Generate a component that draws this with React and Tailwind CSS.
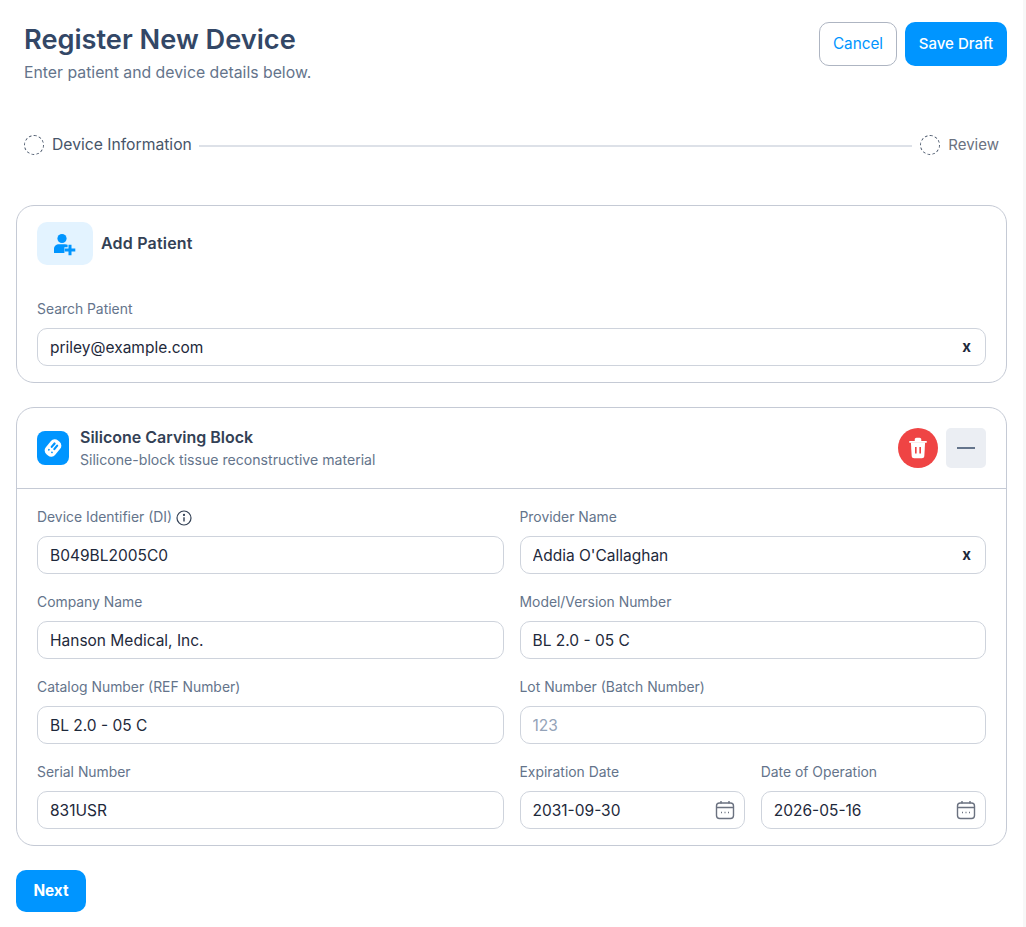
const sans = 'font-["Inter",sans-serif]'

function Field({ label, value, placeholder, info, clear, date, className = '' }) {
  return (
    <div className={`flex flex-col ${className}`}>
      <div className="flex h-[19px] items-center gap-[4px] text-[13.9px] leading-[19px] text-[#64748b]">
        {label}
        {info && (
          <svg width="16" height="16" viewBox="0 0 16 16" fill="none" stroke="#334155" strokeWidth="1.2">
            <circle cx="8" cy="8" r="7" />
            <path d="M8 7.2v4.2" strokeWidth="1.4" />
            <circle cx="8" cy="4.9" r="0.5" fill="#334155" />
          </svg>
        )}
      </div>
      <div className="relative mt-[9px]">
        <input
          readOnly
          value={value || ''}
          placeholder={placeholder}
          className="h-[38px] w-full rounded-[10px] border border-[#ced3dc] bg-white px-3 text-[15.5px] text-[#1e293b] outline-none placeholder:text-[#94a3b8]"
        />
        {clear && (
          <span className="absolute right-[15px] top-[9px] text-[15px] font-bold leading-[20px] text-[#1e293b]">x</span>
        )}
        {date && (
          <svg className="absolute right-[10px] top-[9px]" width="20" height="20" viewBox="0 0 20 20" fill="none" stroke="#6b7280" strokeWidth="1.4">
            <rect x="1.5" y="3" width="17" height="15.5" rx="3" />
            <path d="M1.5 7.5h17M6 1v2.5M14 1v2.5" />
            <path d="M6 12.5h1M9.5 12.5h1M13 12.5h1" strokeWidth="1.6" />
          </svg>
        )}
      </div>
    </div>
  )
}

export default function App() {
  return (
    <div className={`flex h-[927px] w-full overflow-hidden bg-white ${sans}`}>
      <div className="min-w-0 flex-1 px-4">
        <div className="flex justify-between pl-2 pt-[22px]">
          <div>
            <h1 className="mt-[1px] text-[27.2px] font-semibold leading-[34px] text-[#334766]">Register New Device</h1>
            <p className="mt-[5px] text-[15.8px] leading-[22px] text-[#64748b]">Enter patient and device details below.</p>
          </div>
          <div className="flex gap-2">
            <button className="h-11 w-[78px] rounded-[10px] border border-[#aeb5c2] bg-white text-[15.3px] text-[#0095ff]">Cancel</button>
            <button className="h-11 w-[102px] rounded-[10px] bg-[#0095ff] text-[15px] font-medium text-white">Save Draft</button>
          </div>
        </div>

        <div className="mt-[51px] flex h-5 items-center pl-2 pr-2">
          <span className="h-5 w-5 rounded-full border border-dashed border-[#475569]" />
          <span className="ml-2 text-[15.7px] text-[#475569]">Device Information</span>
          <span className="ml-[7px] mr-2 mt-[2px] h-[2px] flex-1 bg-[#dde1e8]" />
          <span className="h-5 w-5 rounded-full border border-dashed border-[#475569]" />
          <span className="ml-2 text-[15px] text-[#6b7280]">Review</span>
        </div>

        <section className="mt-[50px] rounded-[18px] border border-[#c5cad5] px-5 pb-4 pt-4">
          <div className="flex items-center gap-2">
            <div className="flex h-[43px] w-14 items-center justify-center rounded-[10px] bg-[#e3f3ff]">
              <svg width="24" height="24" viewBox="0 0 24 24" fill="#0095ff">
                <circle cx="9" cy="6.5" r="4.6" />
                <path d="M1 21v-4c0-3 2.2-4.8 5-4.8h6c1 0 1.9.2 2.6.6v2.4h-3.2v5.8z" />
                <path d="M15.5 12.8h3v3.7h3.8v3h-3.8v3.7h-3v-3.7h-3.8v-3h3.8z" />
              </svg>
            </div>
            <h2 className="mb-[2px] text-[16px] font-semibold tracking-[0.2px] text-[#334155]">Add Patient</h2>
          </div>
          <Field label="Search Patient" value="priley@example.com" clear className="mt-[35px]" />
        </section>

        <section className="mt-6 rounded-[18px] border border-[#c5cad5]">
          <div className="flex h-[81px] items-center justify-between border-b border-[#c5cad5] pl-5 pr-5">
            <div className="flex items-center gap-[11px]">
              <div className="flex h-[34px] w-8 items-center justify-center rounded-[8px] bg-[#0095ff]">
                <svg width="20" height="20" viewBox="0 0 20 20">
                  <g transform="rotate(40 10 10)">
                    <rect x="4" y="1" width="12" height="18" rx="5" fill="#fff" />
                    <rect x="7.2" y="4.5" width="2.2" height="6.5" rx="1" fill="#0095ff" />
                    <rect x="10.6" y="4.5" width="2.2" height="6.5" rx="1" fill="#0095ff" />
                    <circle cx="8" cy="14" r="0.9" fill="#0095ff" />
                    <circle cx="12" cy="14" r="0.9" fill="#0095ff" />
                  </g>
                </svg>
              </div>
              <div>
                <h2 className="text-[16px] font-semibold leading-[20px] text-[#334155]">Silicone Carving Block</h2>
                <p className="mt-[4px] text-[14.1px] leading-[18px] text-[#64748b]">Silicone-block tissue reconstructive material</p>
              </div>
            </div>
            <div className="flex gap-2">
              <button className="flex h-10 w-10 items-center justify-center rounded-full bg-[#ef4444]">
                <svg width="22" height="24" viewBox="0 0 20 22">
                  <path d="M2 4.5h16v1.6H2zM7 4.5V3.2C7 2.3 7.7 1.6 8.6 1.6h2.8c.9 0 1.6.7 1.6 1.6v1.3z" fill="#fff" />
                  <path d="M3.5 6h13l-.7 12.3c-.1 1.2-1 2.1-2.2 2.1H6.4c-1.2 0-2.1-.9-2.2-2.1z" fill="#fff" />
                  <path d="M8 10v6M12 10v6" stroke="#ef4444" strokeWidth="1.5" />
                </svg>
              </button>
              <button className="flex h-10 w-10 items-center justify-center rounded-[5px] bg-[#ebeef3]">
                <span className="h-[2px] w-[18px] bg-[#64748b]" />
              </button>
            </div>
          </div>
          <div className="grid grid-cols-2 gap-x-4 gap-y-[19px] px-5 pb-4 pt-[19px]">
            <Field label="Device Identifier (DI)" info value="B049BL2005C0" />
            <Field label="Provider Name" value="Addia O'Callaghan" clear />
            <Field label="Company Name" value="Hanson Medical, Inc." />
            <Field label="Model/Version Number" value="BL 2.0 - 05 C" />
            <Field label="Catalog Number (REF Number)" value="BL 2.0 - 05 C" />
            <Field label="Lot Number (Batch Number)" placeholder="123" />
            <Field label="Serial Number" value="831USR" />
            <div className="grid grid-cols-2 gap-4">
              <Field label="Expiration Date" value="2031-09-30" date />
              <Field label="Date of Operation" value="2026-05-16" date />
            </div>
          </div>
        </section>

        <button className="mt-6 h-[42px] w-[70px] rounded-[10px] bg-[#0095ff] text-[15.3px] font-bold text-white">Next</button>
      </div>
      <div className="w-[3px] shrink-0 bg-[#f7f7f7]" />
    </div>
  )
}
